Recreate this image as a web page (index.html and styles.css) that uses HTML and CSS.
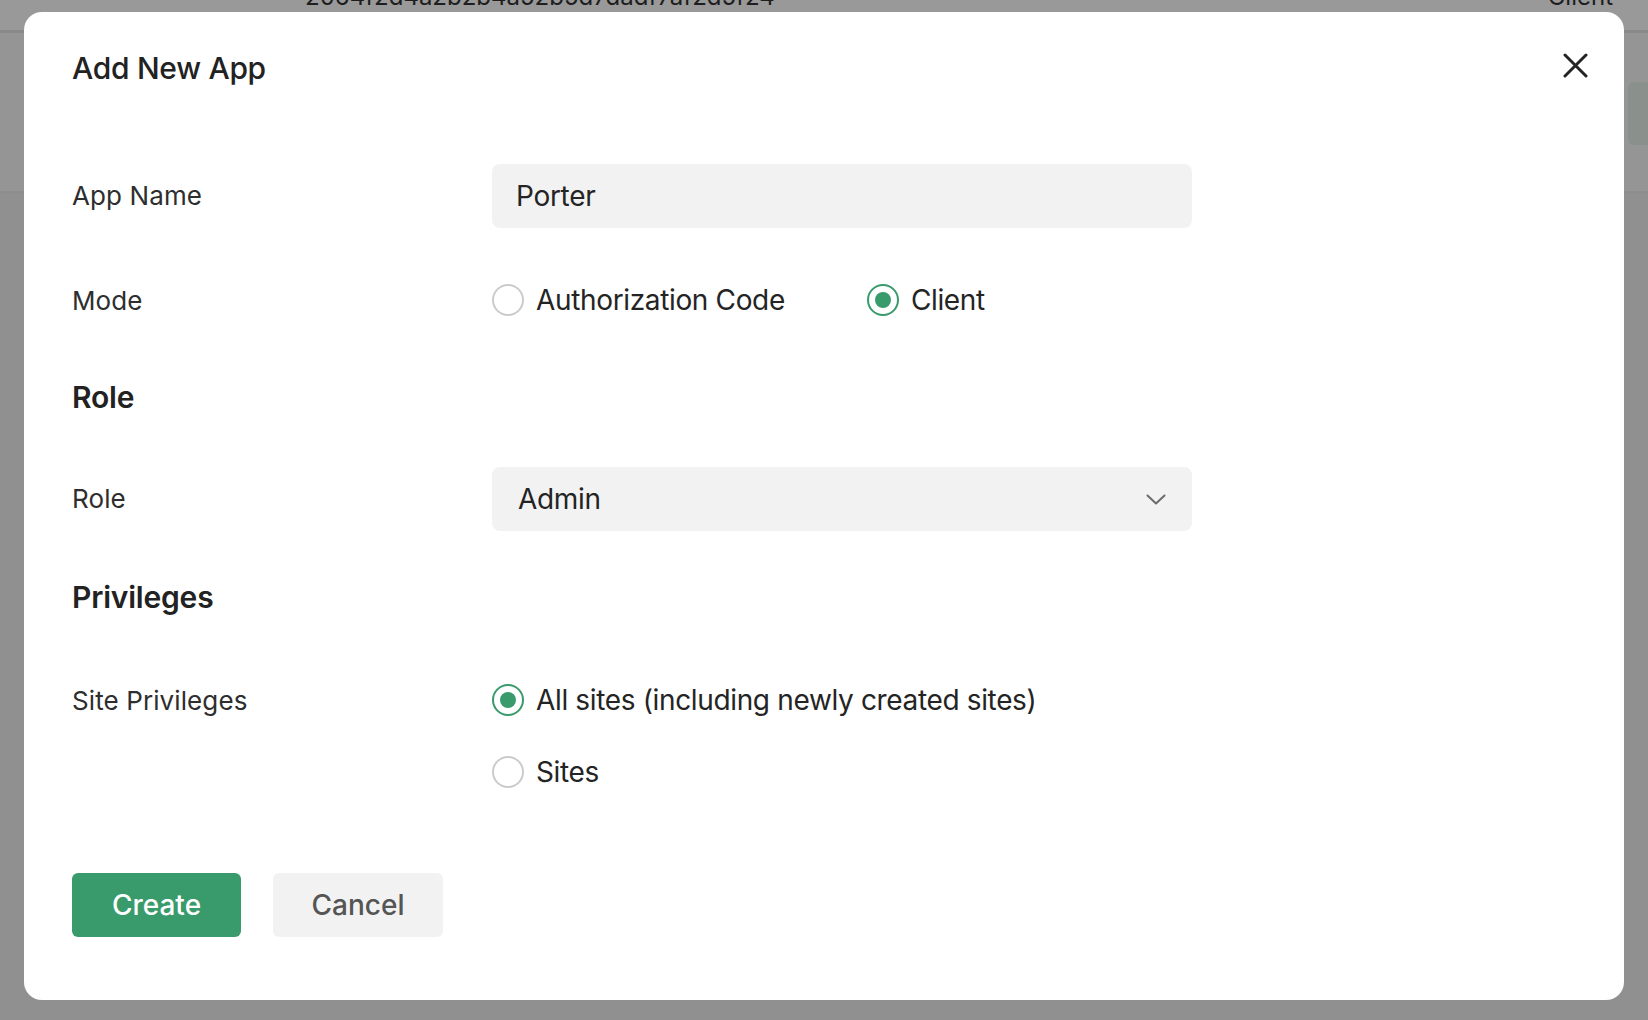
FILE: index.html
```html
<!DOCTYPE html>
<html lang="en">
<head>
<meta charset="utf-8">
<title>Add New App</title>
<link rel="stylesheet" href="styles.css">
</head>
<body>
<div class="page">
  <div class="page-head">
    <span class="page-id">2064f2d4a2b2b4a52b5d7dadf7af2d5f24</span>
    <span class="page-mode">Client</span>
  </div>
  <div class="page-band">
    <div class="page-chip"></div>
  </div>
  <div class="page-rest"></div>
</div>

<div class="backdrop"></div>

<div class="modal">
  <div class="modal-head">
    <h1 class="modal-title">Add New App</h1>
    <svg class="close" width="25" height="25" viewBox="0 0 25 25" aria-label="Close">
      <path d="M2 2 L23 23 M23 2 L2 23" stroke="#232323" stroke-width="3" stroke-linecap="round" fill="none"/>
    </svg>
  </div>

  <div class="form">
    <div class="row row-field">
      <div class="label">App Name</div>
      <div class="input">Porter</div>
    </div>

    <div class="row row-mode">
      <div class="label label-inline">Mode</div>
      <div class="options">
        <div class="option"><span class="radio"></span><span class="option-text">Authorization Code</span></div>
        <div class="option"><span class="radio checked"></span><span class="option-text">Client</span></div>
      </div>
    </div>

    <h2 class="section section-role">Role</h2>

    <div class="row row-field row-select">
      <div class="label">Role</div>
      <div class="input select">
        <span>Admin</span>
        <svg class="chevron" width="20" height="11" viewBox="0 0 20 11"><polyline points="1.5,1.5 10,9.5 18.5,1.5" fill="none" stroke="#6b6b6b" stroke-width="2" stroke-linecap="round" stroke-linejoin="round"/></svg>
      </div>
    </div>

    <h2 class="section section-priv">Privileges</h2>

    <div class="row row-sites">
      <div class="label label-inline">Site Privileges</div>
      <div class="stack">
        <div class="option"><span class="radio checked"></span><span class="option-text">All sites (including newly created sites)</span></div>
        <div class="option"><span class="radio"></span><span class="option-text">Sites</span></div>
      </div>
    </div>

    <div class="actions">
      <button class="btn btn-primary">Create</button>
      <button class="btn btn-secondary">Cancel</button>
    </div>
  </div>
</div>
</body>
</html>
```

FILE: styles.css
```css
html, body {
  margin: 0;
  padding: 0;
}
body {
  width: 1648px;
  height: 1020px;
  overflow: hidden;
  font-family: Inter, "Noto Sans", "Liberation Sans", sans-serif;
  background: #f0f0f0;
}

/* page behind the overlay */
.page {
  display: flex;
  flex-direction: column;
  height: 1020px;
}
.page-head {
  height: 30px;
  background: #ffffff;
  border-bottom: 3px solid #e4e4e4;
  display: flex;
  justify-content: space-between;
  align-items: flex-start;
  padding: 0 35px 0 305px;
  overflow: hidden;
}
.page-id, .page-mode {
  font-size: 24px;
  line-height: 30px;
  color: #333;
  margin-top: -18px;
}
.page-band {
  height: 160px;
  background: #f8f8f8;
  border-bottom: 2px solid #ebebeb;
  display: flex;
  justify-content: flex-end;
  padding-top: 49px;
  box-sizing: border-box;
}
.page-chip {
  width: 20px;
  height: 63px;
  background: #e6f1e8;
  border-radius: 6px 0 0 6px;
}
.page-rest {
  flex: 1;
  background: #f0f0f0;
}

.backdrop {
  position: fixed;
  inset: 0;
  background: rgba(0, 0, 0, 0.4);
}

/* modal */
.modal {
  position: fixed;
  left: 24px;
  top: 12px;
  width: 1600px;
  height: 988px;
  box-sizing: border-box;
  background: #fff;
  border-radius: 18px;
  padding: 38px 36px 0 48px;
  color: #242424;
}
.modal-head {
  display: flex;
  justify-content: space-between;
  align-items: flex-start;
}
.modal-title {
  margin: 0;
  font-size: 30px;
  line-height: 36px;
  font-weight: 500;
  letter-spacing: -0.3px;
  color: #222;
}
.close {
  display: block;
  margin-top: 3px;
}

.form {
  margin-top: 78px;
  display: flex;
  flex-direction: column;
}
.row {
  display: grid;
  grid-template-columns: 420px 700px;
}
.row-field {
  align-items: center;
}
.label {
  font-size: 26px;
  line-height: 64px;
  letter-spacing: 0.1px;
  color: #2e2e2e;
}
.label-inline {
  line-height: 36px;
  padding-top: 1px;
}
.input {
  height: 64px;
  box-sizing: border-box;
  background: #f2f2f2;
  border-radius: 8px;
  padding: 0 24px;
  font-size: 28px;
  line-height: 64px;
  letter-spacing: -0.3px;
  color: #242424;
}
.select {
  display: flex;
  justify-content: space-between;
  align-items: center;
  padding: 0 26px 0 26px;
}
.chevron {
  display: block;
}

.row-mode {
  margin-top: 54px;
  height: 36px;
}
.options {
  display: flex;
  gap: 82px;
}
.option {
  display: flex;
  align-items: center;
  gap: 12px;
  height: 36px;
}
.radio {
  width: 32px;
  height: 32px;
  box-sizing: border-box;
  border: 2px solid #cbcbcb;
  border-radius: 50%;
  display: flex;
  align-items: center;
  justify-content: center;
  flex: none;
}
.radio.checked {
  border-color: #399b6b;
}
.radio.checked::after {
  content: "";
  width: 16px;
  height: 16px;
  border-radius: 50%;
  background: #399b6b;
}
.option-text {
  font-size: 28px;
  line-height: 36px;
  letter-spacing: -0.35px;
  color: #242424;
}

.section {
  margin: 0;
  font-size: 30px;
  line-height: 36px;
  font-weight: 600;
  letter-spacing: -0.2px;
  color: #222;
}
.section-role {
  margin-top: 61px;
}
.row-select {
  margin-top: 52px;
}
.section-priv {
  margin-top: 48px;
}
.row-sites {
  margin-top: 67px;
}
.stack {
  display: flex;
  flex-direction: column;
  gap: 36px;
}

.actions {
  margin-top: 83px;
  display: flex;
  gap: 32px;
}
.btn {
  height: 64px;
  border: none;
  border-radius: 6px;
  font-family: Inter, "Noto Sans", "Liberation Sans", sans-serif;
  font-size: 28px;
  font-weight: 500;
  padding: 0;
  cursor: pointer;
}
.btn-primary {
  width: 169px;
  background: #399b6b;
  color: #fff;
}
.btn-secondary {
  width: 170px;
  background: #f2f2f2;
  color: #555;
}
```
